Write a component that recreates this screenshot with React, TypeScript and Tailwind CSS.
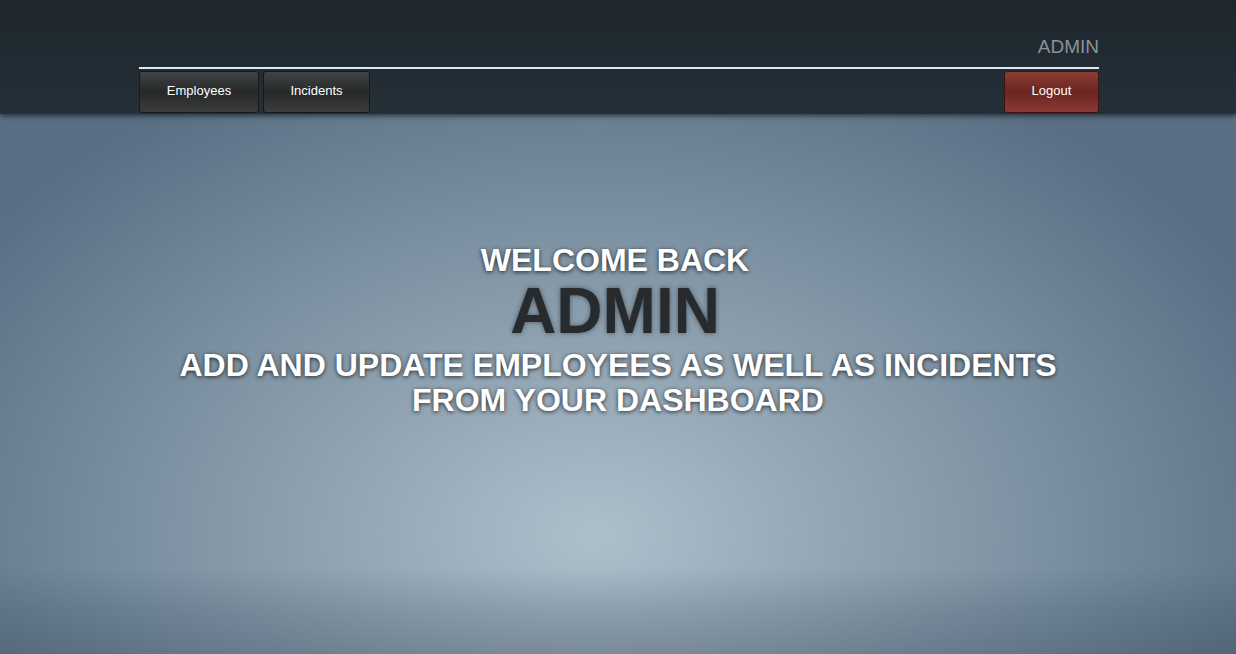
import React from 'react';

const navItems = [
    { label: 'Employees', width: 'w-[120px]' },
    { label: 'Incidents', width: 'w-[107px]' },
];

const NavButton: React.FC<{ label: string; width: string; danger?: boolean }> = ({ label, width, danger }) => (
    <button
        className={`${width} h-[42px] pb-[2px] rounded-[3px] border text-[13px] text-white ${
            danger
                ? 'border-[#3a1512] bg-[linear-gradient(to_bottom,#8b3b34_0%,#6c2520_50%,#8a3a33_100%)]'
                : 'border-[#171a1c] bg-[linear-gradient(to_bottom,#414446_0%,#262829_50%,#3a3c3d_100%)]'
        }`}
    >
        {label}
    </button>
);

export default function App() {
    return (
        <div className="min-h-[654px] flex flex-col font-['Liberation_Sans',Arial,sans-serif] bg-[#5d7286]">
            <header className="relative z-10 h-[114px] bg-[linear-gradient(to_bottom,#1e272e,#252f37)] shadow-[0_2px_5px_rgba(0,0,0,0.55)]">
                <div className="w-[962px] mx-auto pl-[2px] pt-[35px]">
                    <div className="text-right text-[19px] leading-[23px] text-[#8a9399]">ADMIN</div>
                    <div className="mt-[9px] h-[2px] bg-[#dce9f1]" />
                    <nav className="mt-[2px] flex items-center">
                        <div className="flex gap-[4px]">
                            {navItems.map((item) => (
                                <NavButton key={item.label} label={item.label} width={item.width} />
                            ))}
                        </div>
                        <div className="ml-auto">
                            <NavButton label="Logout" width="w-[95px]" danger />
                        </div>
                    </nav>
                </div>
            </header>

            <main className="flex-1 min-h-[540px] pt-[128px] text-center bg-[linear-gradient(to_bottom,rgba(40,60,80,0)_0%,rgba(40,60,80,0)_84%,rgba(40,60,80,0.18)_92%,rgba(40,60,80,0.3)_100%),radial-gradient(ellipse_60%_95%_at_48%_78%,#aebfcc_0%,#96a8b6_30%,#7a8fa0_62%,#5a6f84_100%)]">
                <h2 className="pr-[6px] text-[32px] leading-[36px] font-bold text-white [text-shadow:0_1px_4px_rgba(0,0,0,0.75)]">WELCOME BACK</h2>
                <h1 className="pr-[6px] text-[64px] leading-[67px] font-bold text-[#282b2d] [text-shadow:0_0_5px_rgba(0,0,0,0.45)]">ADMIN</h1>
                <h2 className="mt-[3px] text-[32px] leading-[35px] font-bold text-white [text-shadow:0_1px_4px_rgba(0,0,0,0.75)]">
                    ADD AND UPDATE EMPLOYEES AS WELL AS INCIDENTS
                    <br />
                    FROM YOUR DASHBOARD
                </h2>
            </main>
        </div>
    );
}
